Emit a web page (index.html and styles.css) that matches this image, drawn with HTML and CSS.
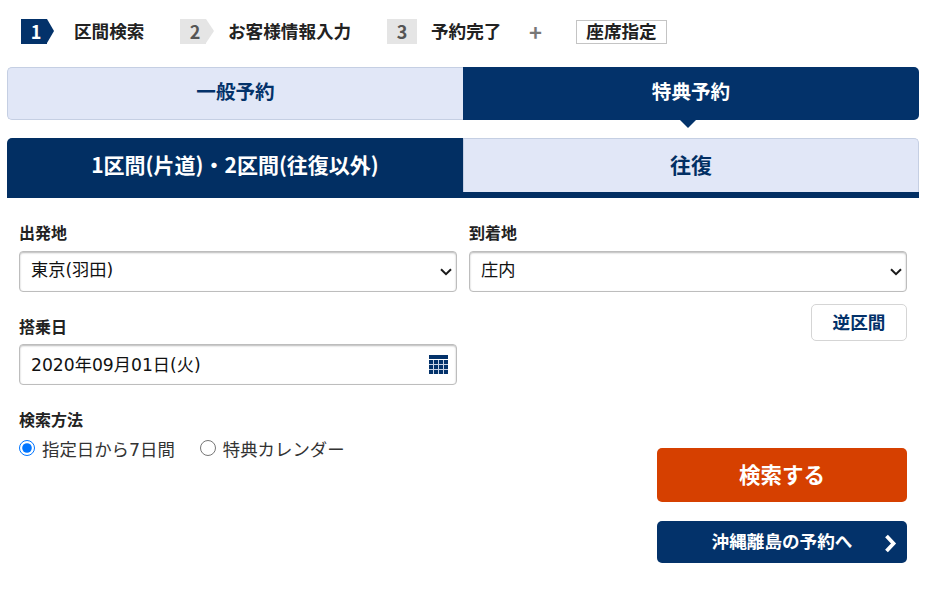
FILE: index.html
```html
<!DOCTYPE html>
<html lang="ja">
<head>
<meta charset="utf-8">
<title>区間検索</title>
<link rel="stylesheet" href="styles.css">
</head>
<body>
<ol class="steps">
  <li class="step step-one"><span class="num num-active">1</span><span class="step-label">区間検索</span></li>
  <li class="step step-two"><span class="num num-arrow">2</span><span class="step-label">お客様情報入力</span></li>
  <li class="step step-three"><span class="num">3</span><span class="step-label">予約完了</span></li>
  <li class="plus">+</li>
  <li class="seat">座席指定</li>
</ol>

<div class="tabs-main">
  <div class="tab-main">一般予約</div>
  <div class="tab-main tab-main-on">特典予約</div>
</div>

<div class="tabs-sub">
  <div class="tab-sub tab-sub-on">1区間(片道)・2区間(往復以外)</div>
  <div class="tab-sub">往復</div>
</div>

<form class="form">
  <div class="col">
    <label class="label label-first">出発地</label>
    <div class="field">
      <select class="control"><option>東京(羽田)</option></select>
      <svg class="chevron" width="12" height="8" viewBox="0 0 12 8"><path d="M1 1.200 6 6.200l5-5" fill="none" stroke="#1a1a1a" stroke-width="2"/></svg>
    </div>
    <label class="label label-date">搭乗日</label>
    <div class="field">
      <input class="control" type="text" value="2020年09月01日(火)">
      <svg class="calendar" width="19" height="19" viewBox="0 0 19 19">
        <rect x="0" y="0" width="19" height="4" fill="#03326a"/>
        <rect x="0" y="5" width="19" height="14" fill="#03326a"/>
        <g fill="#c9d4e6">
          <rect x="4" y="5" width="1" height="14"/><rect x="9" y="5" width="1" height="14"/><rect x="14" y="5" width="1" height="14"/>
          <rect x="0" y="9" width="19" height="1"/><rect x="0" y="14" width="19" height="1"/>
        </g>
      </svg>
    </div>
    <label class="label label-method">検索方法</label>
    <div class="radios">
      <label class="radio"><input type="radio" name="method" checked>指定日から7日間</label>
      <label class="radio"><input type="radio" name="method">特典カレンダー</label>
    </div>
  </div>
  <div class="col col-right">
    <label class="label label-first">到着地</label>
    <div class="field">
      <select class="control"><option>庄内</option></select>
      <svg class="chevron" width="12" height="8" viewBox="0 0 12 8"><path d="M1 1.200 6 6.200l5-5" fill="none" stroke="#1a1a1a" stroke-width="2"/></svg>
    </div>
    <button type="button" class="swap">逆区間</button>
    <button type="button" class="search">検索する</button>
    <button type="button" class="island">沖縄離島の予約へ
      <svg class="island-arrow" width="13" height="19" viewBox="0 0 13 19"><path d="M2.500 2 9.500 9.500l-7 7.500" fill="none" stroke="#fff" stroke-width="3.800"/></svg>
    </button>
  </div>
</form>
</body>
</html>
```
FILE: styles.css
```css
* { box-sizing: border-box; }

html, body { margin: 0; padding: 0; background: #fff; }

body {
  width: 926px;
  height: 590px;
  padding: 0 7px;
  overflow: hidden;
  font-family: "Noto Sans CJK JP", "Noto Sans", sans-serif;
  color: #222;
  font-size: 16px;
}

.steps {
  display: flex;
  align-items: flex-start;
  list-style: none;
  margin: 0;
  padding: 19px 0 0 14px;
  height: 67px;
}

.step { display: flex; align-items: center; height: 25px; font-weight: 700; font-size: 17.6px; }
.step-label { position: relative; top: -1px; }
.step-one { width: 159px; }
.step-two { width: 207px; }
.step-three { width: 142px; }

.num {
  width: 26px;
  height: 25px;
  background: #e5e5e5;
  color: #555;
  font-size: 18px;
  font-weight: 700;
  line-height: 25px;
  text-align: center;
  position: relative;
  margin-right: 22px;
  padding-left: 4px;
}

.num::after {
  content: "";
  position: absolute;
  left: 100%;
  top: 0;
  border-left: 8px solid #e5e5e5;
  border-top: 12.5px solid transparent;
  border-bottom: 12.5px solid transparent;
}

.num-active { background: #03326a; color: #fff; margin-right: 27px; }
.num-active::after { border-left-color: #03326a; border-left-width: 7px; }
.step-three .num { margin-right: 0; width: 30px; padding-left: 0; }
.step-three .num::after { display: none; }
.step-three .step-label { margin-left: 14px; }

.plus {
  width: 47px;
  height: 25px;
  line-height: 24px;
  font-size: 22px;
  font-weight: 700;
  color: #777;
}

.seat {
  width: 91px;
  height: 24px;
  margin-top: 1px;
  border: 1px solid #c4c4c4;
  font-size: 17.6px;
  font-weight: 700;
  line-height: 19px;
  text-align: center;
}

.tabs-main { display: grid; grid-template-columns: 456px 456px; height: 53px; }

.tab-main {
  background: #e1e7f7;
  border: 1px solid #c5cfe3;
  border-right: 0;
  border-radius: 5px 0 0 5px;
  color: #03326a;
  font-size: 19.6px;
  font-weight: 700;
  line-height: 45px;
  text-align: center;
}

.tab-main-on {
  position: relative;
  background: #03326a;
  border: 0;
  border-radius: 0 5px 5px 0;
  color: #fff;
  line-height: 47px;
}

.tab-main-on::after {
  content: "";
  position: absolute;
  top: 100%;
  left: 217px;
  border-top: 8px solid #03326a;
  border-left: 8px solid transparent;
  border-right: 8px solid transparent;
}

.tabs-sub {
  display: grid;
  grid-template-columns: 456px 456px;
  height: 60px;
  margin-top: 18px;
  border-bottom: 6px solid #022f63;
}

.tab-sub {
  background: #e1e7f7;
  border: 1px solid #c5cfe3;
  border-bottom: 0;
  border-radius: 0 5px 0 0;
  color: #022f63;
  font-size: 21px;
  font-weight: 700;
  line-height: 50px;
  text-align: center;
}

.tab-sub-on {
  background: #022f63;
  border: 0;
  border-radius: 5px 0 0 0;
  color: #fff;
  line-height: 52px;
}

.form {
  display: grid;
  grid-template-columns: 438px 438px;
  column-gap: 12px;
  padding: 0 12px;
}

.col { display: flex; flex-direction: column; align-items: stretch; }

.label { display: block; font-size: 16px; font-weight: 700; line-height: 20px; height: 20px; }
.label-first { margin-top: 24px; margin-bottom: 9px; }
.label-date { margin-top: 24px; margin-bottom: 8px; }
.label-method { margin-top: 24px; margin-bottom: 1px; }

.field { position: relative; height: 41px; }

.control {
  display: block;
  width: 100%;
  height: 41px;
  padding: 0 11px 3px;
  border: 1px solid #bdbdbd;
  border-radius: 4px;
  box-shadow: inset 0 1px 2px rgba(0, 0, 0, .28);
  background: #fff;
  color: #111;
  font-family: "DejaVu Sans", "Noto Sans CJK JP", sans-serif;
  font-size: 17.2px;
  appearance: none;
  outline: 0;
}

.chevron { position: absolute; right: 5px; top: 17px; pointer-events: none; }
.calendar { position: absolute; right: 9px; top: 11px; }

.radios { display: flex; margin-top: 6px; height: 24px; align-items: center; }

.radio {
  display: flex;
  align-items: center;
  font-family: "DejaVu Sans", "Noto Sans CJK JP", sans-serif;
  font-size: 17.4px;
  color: #333;
  margin-right: 25px;
}
.radio input { width: 16px; height: 16px; margin: 0 7px 0 0; }

.col-right { align-items: flex-end; }
.col-right .label { align-self: stretch; }
.col-right .field { align-self: stretch; }

button { font-family: inherit; cursor: pointer; display: block; }

.swap {
  width: 96px;
  height: 37px;
  margin-top: 12px;
  padding: 0 0 2px;
  background: #fff;
  border: 1px solid #d5d5d5;
  border-radius: 5px;
  color: #03326a;
  font-size: 17.6px;
  font-weight: 700;
}

.search {
  width: 250px;
  height: 54px;
  margin-top: 107px;
  padding: 0 0 3px;
  background: #d64000;
  border: 0;
  border-radius: 5px;
  color: #fff;
  font-size: 21.5px;
  font-weight: 700;
}

.island {
  position: relative;
  width: 250px;
  height: 42px;
  margin-top: 19px;
  padding: 0 0 3px;
  background: #03326a;
  border: 0;
  border-radius: 5px;
  color: #fff;
  font-size: 17.6px;
  font-weight: 700;
}

.island-arrow { position: absolute; right: 10px; top: 13px; }
```
